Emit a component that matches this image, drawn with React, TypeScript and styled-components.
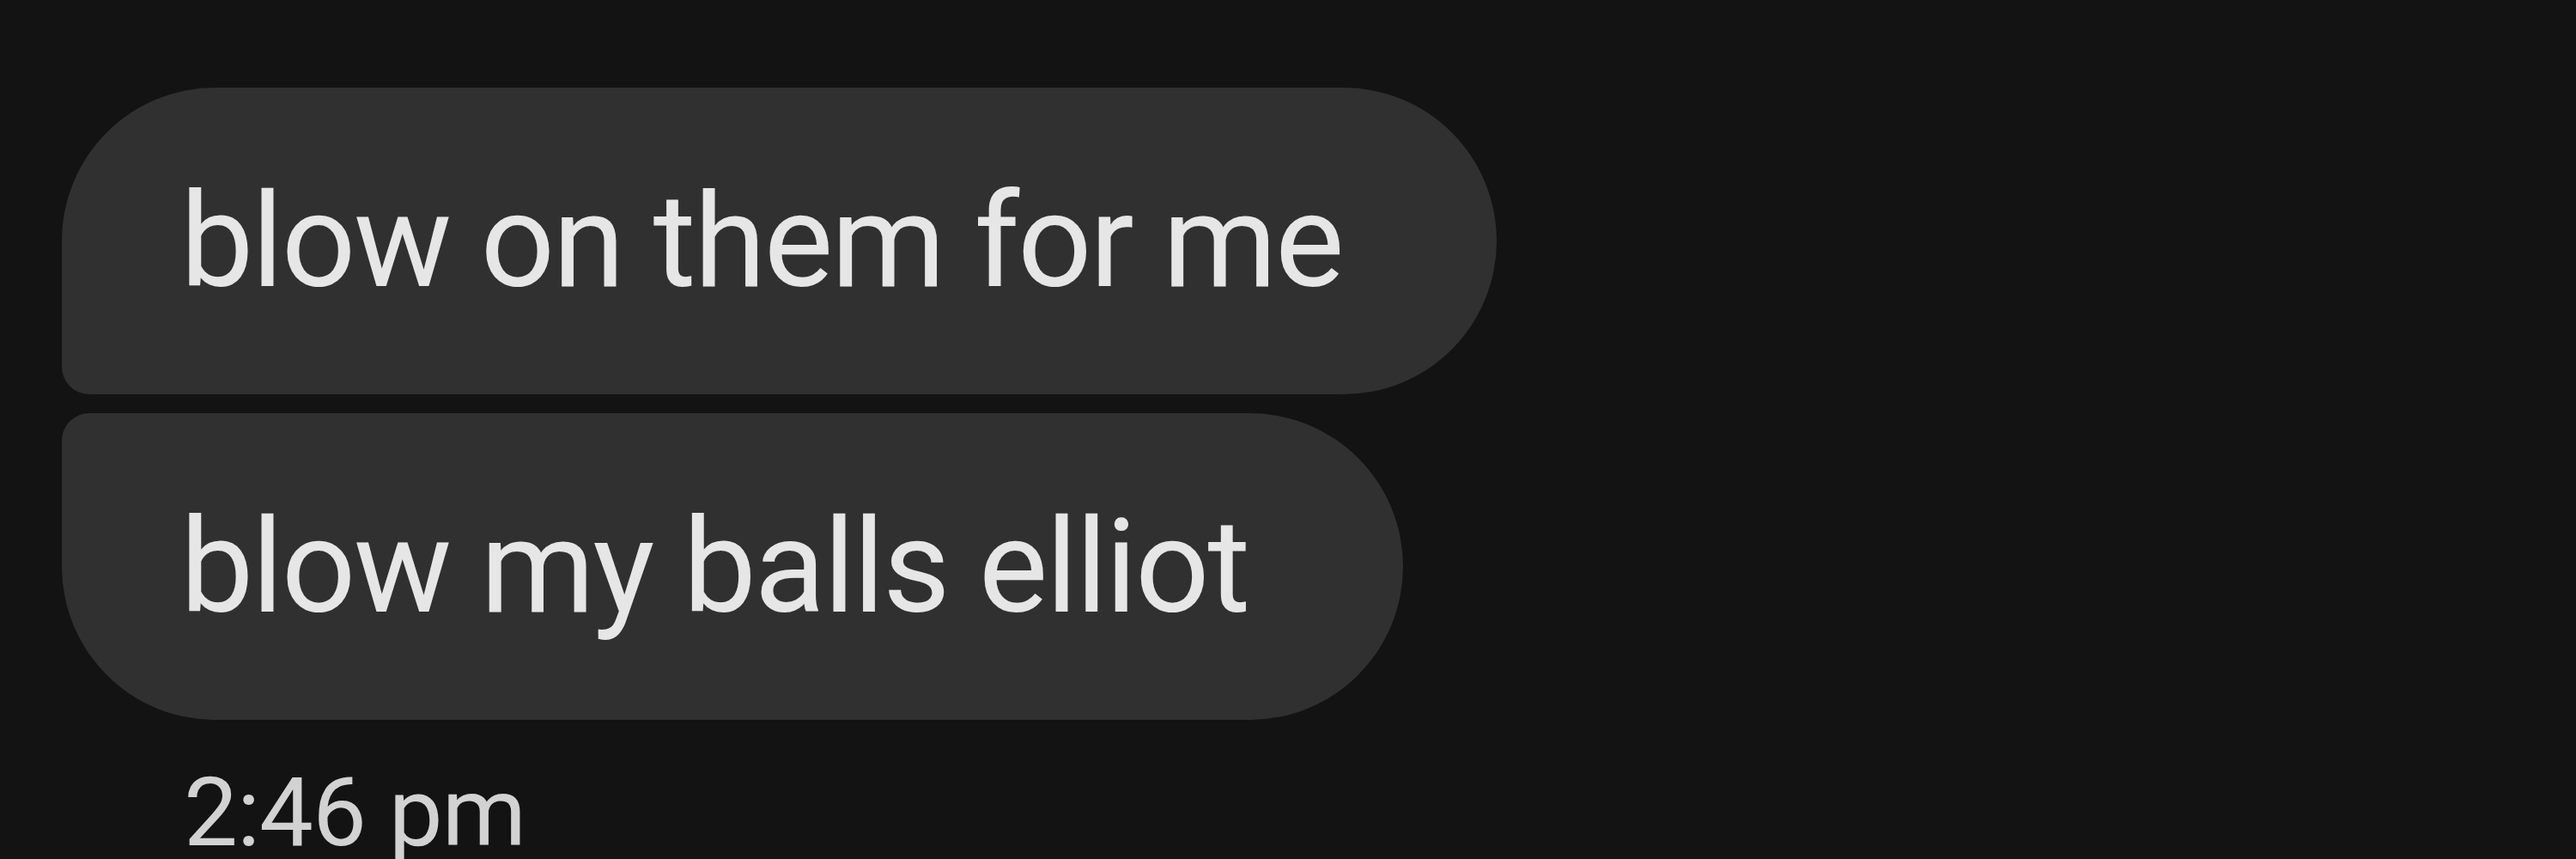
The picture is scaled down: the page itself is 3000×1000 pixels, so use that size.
import { createGlobalStyle, styled } from "styled-components";

const GlobalStyle = createGlobalStyle`
  html,
  body {
    margin: 0;
    padding: 0;
    background-color: #131313;
  }

  body {
    font-family: Roboto, "Open Sans", sans-serif;
  }
`;

type BubbleShape = "top" | "bottom";

const messages: { id: number; text: string; shape: BubbleShape }[] = [
  { id: 1, text: "blow on them for me", shape: "top" },
  { id: 2, text: "blow my balls elliot", shape: "bottom" },
];

const App = () => {
  return (
    <>
      <GlobalStyle />
      <ThreadWrapper>
        <BubbleGroup>
          {messages.map((message) => (
            <Bubble key={message.id} $shape={message.shape}>
              <BubbleText>{message.text}</BubbleText>
            </Bubble>
          ))}
        </BubbleGroup>
        <Timestamp>2:46 pm</Timestamp>
      </ThreadWrapper>
    </>
  );
};

export default App;

const ThreadWrapper = styled.div`
  display: flex;
  flex-direction: column;
  align-items: flex-start;

  width: 3000px;
  height: 1000px;
  padding: 102px 0 0 72px;
  box-sizing: border-box;
  overflow: hidden;

  background-color: #131313;
`;

const BubbleGroup = styled.div`
  display: flex;
  flex-direction: column;
  align-items: flex-start;
  gap: 22px;
`;

const Bubble = styled.div<{ $shape: BubbleShape }>`
  display: flex;
  align-items: center;

  height: 357px;
  padding: 0 180px 0 138px;
  box-sizing: border-box;

  background-color: #303030;
  border-radius: ${({ $shape }) =>
    $shape === "top" ? "179px 179px 179px 32px" : "32px 179px 179px 179px"};
`;

const BubbleText = styled.span`
  color: #e6e6e6;
  font-size: 152px;
  line-height: 1;
  letter-spacing: -2.3px;
  white-space: nowrap;
`;

const Timestamp = styled.span`
  margin: 52px 0 0 142px;

  color: #d2d2d2;
  font-size: 112px;
  line-height: 1;
  letter-spacing: -1px;
  white-space: nowrap;
`;
